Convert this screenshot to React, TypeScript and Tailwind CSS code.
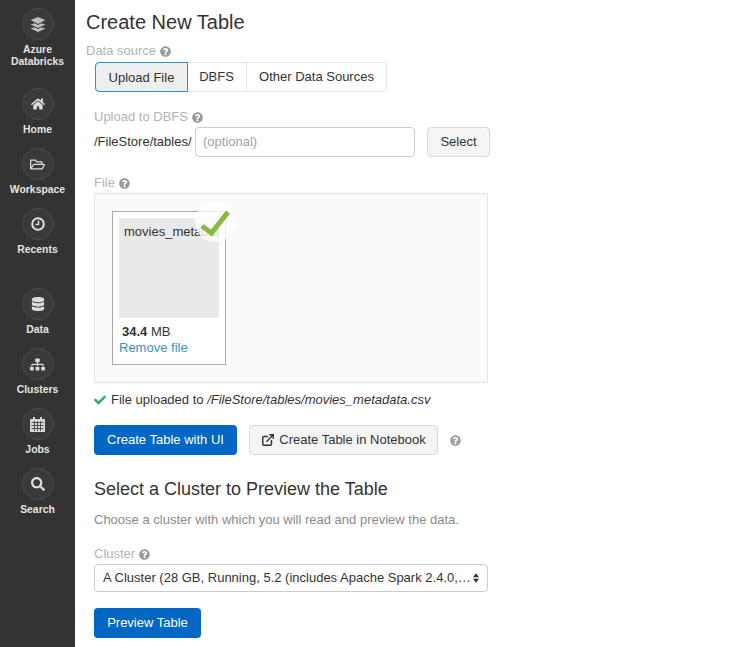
import type { ReactNode } from "react";
import {
  FaCheck,
  FaDatabase,
  FaHome,
  FaQuestionCircle,
  FaRegFolderOpen,
  FaSearch,
  FaSitemap,
} from "react-icons/fa";
import { FiExternalLink } from "react-icons/fi";

function NavItem({ icon, label, className = "" }: { icon: ReactNode; label: ReactNode; className?: string }) {
  return (
    <div className={`flex flex-col items-center ${className}`}>
      <div className="flex h-8 w-8 items-center justify-center rounded-full border border-[#4a4a4a] bg-[#3a3a3a] text-[#dcdcdc]">
        {icon}
      </div>
      <div className="mt-[4px] text-center text-[10.4px] font-bold leading-[12px] text-[#e3e3e3]">{label}</div>
    </div>
  );
}

function AzureIcon() {
  return (
    <svg width="18" height="17" viewBox="0 0 18 17" className="fill-[#bdbdbd] stroke-[#3a3a3a]">
      <path d="M9 9.5 17.5 12.5 9 16.5.5 12.5z" strokeWidth="1" />
      <path d="M9 5.5 17.5 8.5 9 12.5.5 8.5z" strokeWidth="1" />
      <path d="M9 .5 17.5 4 9 8.5.5 4z" strokeWidth="1" />
    </svg>
  );
}

function ClockIcon() {
  return (
    <svg width="14" height="14" viewBox="0 0 14 14" fill="none" className="stroke-[#e0e0e0]">
      <circle cx="7" cy="7" r="5.8" strokeWidth="2" />
      <path d="M7.5 3.5V7.5H4.5" strokeWidth="1.5" />
    </svg>
  );
}

function CalendarIcon() {
  return (
    <svg width="15" height="15" viewBox="0 0 15 15" className="fill-[#d6d6d6]">
      <path d="M3 0h2v2h5V0h2v2h3v13H0V2h3z" />
      <path
        d="M1.5 5.5h12M1.5 8.5h12M1.5 11.5h12M4.5 4v10M7.5 4v10M10.5 4v10"
        className="stroke-[#3a3a3a]"
        strokeWidth="0.8"
      />
    </svg>
  );
}

function Help() {
  return <FaQuestionCircle className="ml-1 inline-block text-[11px] text-[#9a9a9a]" />;
}

function Label({ children, className = "" }: { children: ReactNode; className?: string }) {
  return (
    <div className={`flex h-4 items-center text-[13px] text-[#b3b3b3] ${className}`}>
      {children}
      <Help />
    </div>
  );
}

export default function App() {
  return (
    <div className="flex h-[647px] w-[742px] overflow-hidden bg-white font-['Liberation_Sans',Arial,sans-serif] text-[#333]">
      <aside className="w-[75px] shrink-0 bg-[#333333] pt-2">
        <NavItem icon={<AzureIcon />} label={<>Azure<br />Databricks</>} />
        <NavItem className="mt-[20px]" icon={<FaHome className="text-[14px]" />} label="Home" />
        <NavItem className="mt-[12px]" icon={<FaRegFolderOpen className="text-[15px]" />} label="Workspace" />
        <NavItem className="mt-[12px]" icon={<ClockIcon />} label="Recents" />
        <NavItem className="mt-[32px]" icon={<FaDatabase className="text-[14px]" />} label="Data" />
        <NavItem className="mt-[12px]" icon={<FaSitemap className="text-[15px]" />} label="Clusters" />
        <NavItem className="mt-[12px]" icon={<CalendarIcon />} label="Jobs" />
        <NavItem className="mt-[12px]" icon={<FaSearch className="text-[14px]" />} label="Search" />
      </aside>

      <main className="flex-1 pl-[11px]">
        <h1 className="mt-[10px] text-[20px] leading-[24px] text-[#333]">Create New Table</h1>
        <Label className="mt-[9px]">Data source</Label>

        <div className="ml-2 w-[396px]">
          <div className="ml-px mt-[3px] flex h-[30px] w-[292px] rounded border border-[#e6e6e6] text-[13px]">
            <div className="-m-px flex w-[93px] items-center justify-center rounded-l border border-[#1f97c4] bg-[#eeeeee] pt-[2px]">
              Upload File
            </div>
            <div className="flex w-[60px] items-center justify-center border-r border-[#e6e6e6]">DBFS</div>
            <div className="flex flex-1 items-center justify-center">Other Data Sources</div>
          </div>

          <Label className="mt-[17px]">Upload to DBFS</Label>
          <div className="mt-[2px] flex items-center">
            <span className="w-[101px] text-[13px]">/FileStore/tables/</span>
            <div className="flex h-[30px] w-[220px] items-center rounded border border-[#cccccc] px-[7px] text-[13px] text-[#a0a0a0]">
              (optional)
            </div>
            <div className="ml-3 flex h-[30px] w-[63px] items-center justify-center rounded border border-[#d9d9d9] bg-[#f4f4f4] text-[13px]">
              Select
            </div>
          </div>

          <Label className="mt-[18px]">File</Label>
          <div className="mt-[2px] h-[190px] w-[394px] border border-[#e6e6e6] bg-[#fafafa] pl-[17px] pt-[17px]">
            <div className="relative h-[154px] w-[114px] border border-[#a8a8a8] bg-white px-[6px] pt-[6px]">
              <div className="h-[100px] w-[100px] overflow-hidden bg-[#e9e9e9] pl-[5px] pt-[4px] text-[13px] leading-[20px] whitespace-nowrap">
                movies_metadata.csv
              </div>
              <div className="absolute -right-[10px] -top-[10px] h-10 w-10 rounded-full bg-white/80">
                <svg width="40" height="40" viewBox="0 0 40 40" fill="none" className="stroke-[#84bb3c]">
                  <path d="M7 24 16.5 31 33 10" strokeWidth="5" />
                </svg>
              </div>
              <div className="mt-[6px] pl-[3px] text-[13px] leading-[16px]">
                <b>34.4</b> MB
              </div>
              <div className="text-[13px] leading-[15px] text-[#3a92c4]">Remove file</div>
            </div>
          </div>

          <div className="mt-[9px] flex h-4 items-center text-[13px]">
            <FaCheck className="mr-[5px] text-[12px] text-[#26ae60]" />
            File uploaded to&nbsp;<i>/FileStore/tables/movies_metadata.csv</i>
          </div>

          <div className="mt-[17px] flex items-center">
            <div className="flex h-[30px] w-[143px] items-center justify-center rounded bg-[#0067c5] text-[13px] text-white">
              Create Table with UI
            </div>
            <div className="ml-3 flex h-[30px] w-[189px] items-center justify-center rounded border border-[#d9d9d9] bg-[#f4f4f4] text-[13px]">
              <FiExternalLink className="mr-[4px] text-[14px]" strokeWidth={2.5} />
              Create Table in Notebook
            </div>
            <FaQuestionCircle className="ml-3 text-[11px] text-[#a0a0a0]" />
          </div>

          <h2 className="mt-[22px] text-[18px] leading-[24px]">Select a Cluster to Preview the Table</h2>
          <p className="mt-[11px] text-[13px] leading-[16px] text-[#8a8a8a]">
            Choose a cluster with which you will read and preview the data.
          </p>

          <Label className="mt-[18px]">Cluster</Label>
          <div className="mt-[2px] flex h-[28px] w-[394px] items-center justify-between rounded border border-[#cccccc] pl-2 pr-2 text-[13px]">
            <span className="whitespace-nowrap">A Cluster (28 GB, Running, 5.2 (includes Apache Spark 2.4.0,…</span>
            <svg width="6" height="10" viewBox="0 0 7 11" className="fill-[#333]">
              <path d="M3.5 0 7 4.5H0zM0 6.5h7L3.5 11z" />
            </svg>
          </div>

          <div className="mt-[16px] flex h-[30px] w-[107px] items-center justify-center rounded bg-[#0067c5] text-[13px] text-white">
            Preview Table
          </div>
        </div>
      </main>
    </div>
  );
}
